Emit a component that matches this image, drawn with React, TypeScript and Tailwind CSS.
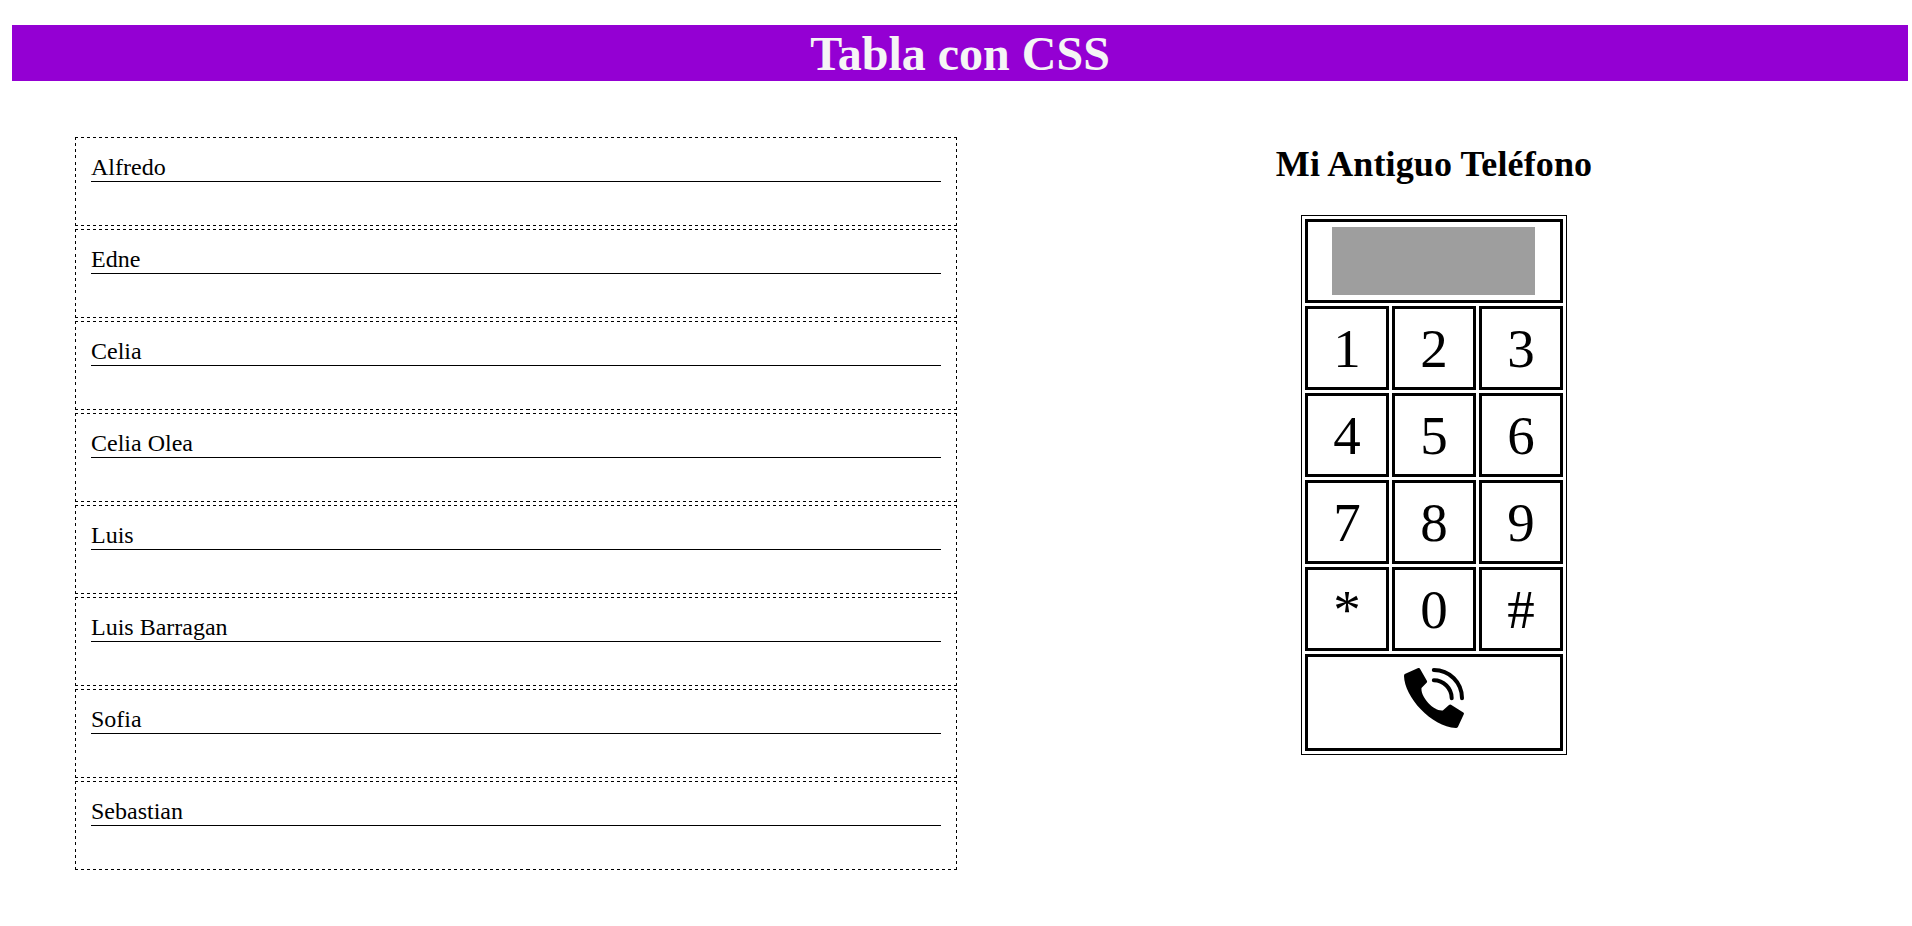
const contacts = ["Alfredo", "Edne", "Celia", "Celia Olea", "Luis", "Luis Barragan", "Sofia", "Sebastian"];
const keys = ["1", "2", "3", "4", "5", "6", "7", "8", "9", "*", "0", "#"];

// Dashed outline with 3px dashes and 3px gaps, a dash at every corner.
const dashedBox =
  "bg-[image:repeating-linear-gradient(90deg,#000_0_3px,transparent_3px_6.02px),repeating-linear-gradient(90deg,#000_0_3px,transparent_3px_6.02px),repeating-linear-gradient(180deg,#000_0_3px,transparent_3px_6.14px),repeating-linear-gradient(180deg,#000_0_3px,transparent_3px_6.14px)] bg-[size:100%_1px,100%_1px,1px_100%,1px_100%] bg-[position:0_0,0_100%,0_0,100%_0] bg-no-repeat";

function PhoneIcon() {
  return (
    <svg width="60" height="60" viewBox="0 0 60 60" fill="none" role="img" aria-label="Llamar">
      <path
        d="M0.8 6 L14.2 0 Q15.3 -0.3 16 0.8 L23 13 Q23.3 14 22.6 14.8 L17.5 20 C16.5 29 29.5 43.5 38.8 42.4 L45 37 Q46 36.3 47 36.8 L59.3 44.4 Q60.3 45.2 59.8 46.3 L54 58.8 Q53.3 60 52 60 C27 58.5 0.5 29 0 8 Q0 6.4 0.8 6 Z"
        fill="black"
      />
      <path d="M29.8 2 C45.5 2 58 14.5 58 30.2" stroke="black" strokeWidth="4" strokeLinecap="round" />
      <path d="M29.8 12.2 C39.6 12.2 47.7 20.3 47.7 30.2" stroke="black" strokeWidth="4" strokeLinecap="round" />
    </svg>
  );
}

export default function App() {
  return (
    <div className="h-[926px] bg-white pt-[25px] pr-1 pl-3 font-['Liberation_Serif',serif] text-black">
      <h1 className="h-14 bg-[#9400d3] text-center text-5xl leading-[58px] font-bold text-[#f5f5f5]">Tabla con CSS</h1>
      <main className="mt-14 flex items-start pl-[63px]">
        <ul className="flex w-[882px] flex-col gap-[3px]">
          {contacts.map((name) => (
            <li key={name} className={`h-[89px] px-4 pt-4 ${dashedBox}`}>
              <p className="h-[29px] border-b border-black text-2xl leading-[28px]">{name}</p>
            </li>
          ))}
        </ul>
        <section className="ml-[277px] flex w-[400px] flex-col items-center">
          <h2 className="mt-[7px] text-4xl leading-[41px] font-bold tracking-[0.12px] whitespace-nowrap">Mi Antiguo Teléfono</h2>
          <div className="mt-[30px] grid w-[266px] grid-cols-3 gap-[3px] border border-black p-[3px]">
            <div className="col-span-3 flex h-[84px] justify-center border-3 border-black pt-[5px] pr-px">
              <div className="h-[68px] w-[203px] bg-[#9e9e9e]" />
            </div>
            {keys.map((key) => (
              <div key={key} className="h-[84px] border-3 border-black text-center text-[55px] leading-[80px]">
                {key}
              </div>
            ))}
            <div className="col-span-3 flex h-[97px] justify-center border-3 border-black pt-[11px]">
              <PhoneIcon />
            </div>
          </div>
        </section>
      </main>
    </div>
  );
}
